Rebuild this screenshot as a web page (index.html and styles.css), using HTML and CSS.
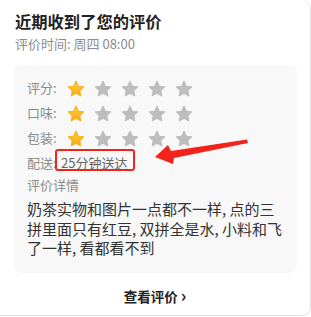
FILE: index.html
```html
<!DOCTYPE html>
<html lang="zh">
<head>
    <meta charset="UTF-8">
    <meta name="viewport" content="width=device-width, initial-scale=1.0">
    <title>评价</title>
    <link rel="stylesheet" href="styles.css">
</head>
<body>
    <div class="card">
        <h1 class="titulo">近期收到了您的评价</h1>
        <p class="fecha">评价时间: 周四 08:00</p>
        <div class="caja">
            <div class="fila">
                <span class="etiqueta">评分:</span>
                <div class="estrellas" data-n="1"></div>
            </div>
            <div class="fila">
                <span class="etiqueta">口味:</span>
                <div class="estrellas" data-n="1"></div>
            </div>
            <div class="fila">
                <span class="etiqueta">包装:</span>
                <div class="estrellas" data-n="1"></div>
            </div>
            <div class="fila">
                <span class="etiqueta">配送:</span>
                <span class="valor">25分钟送达<span class="marca"></span></span>
            </div>
            <div class="detalle-titulo">评价详情</div>
            <p class="detalle">奶茶实物和图片一点都不一样, 点的三拼里面只有红豆, 双拼全是水, 小料和飞了一样, 看都看不到</p>
        </div>
        <div class="pie">查看评价 <span class="flecha">&#8250;</span></div>
        <svg class="anotacion" width="311" height="317" viewBox="0 0 311 317">
            <polygon points="155,157 168,145 171,151 247,139.5 248,143 174,158 173,164" fill="#f2231b"/>
        </svg>
    </div>

    <script>
        const estrella = (llena) => `
            <svg class="estrella" width="18" height="18" viewBox="0 0 24 24">
                <path d="M12 1.8l3.1 6.5 7 .9-5.1 4.9 1.3 7-6.3-3.4-6.3 3.4 1.3-7L1.9 9.2l7-.9z"
                    fill="${llena ? 'url(#oro)' : '#bdbdbd'}" stroke="${llena ? '#f5b21c' : '#bdbdbd'}"
                    stroke-width="1.6" stroke-linejoin="round"/>
            </svg>`;

        document.querySelectorAll('.estrellas').forEach(caja => {
            const n = Number(caja.dataset.n);
            let html = '';
            for (let i = 0; i < 5; i++) {
                html += estrella(i < n);
            }
            caja.innerHTML = html;
        });

        // degradado compartido de las estrellas
        document.body.insertAdjacentHTML('beforeend', `
            <svg width="0" height="0" style="position:absolute">
                <defs>
                    <linearGradient id="oro" x1="0" y1="0" x2="0" y2="1">
                        <stop offset="0" stop-color="#ffd23a"/>
                        <stop offset="1" stop-color="#f7a81b"/>
                    </linearGradient>
                </defs>
            </svg>`);
    </script>
</body>
</html>
```

FILE: styles.css
```css
body {
    margin: 0;
    padding: 0;
    background: #ffffff;
    font-family: "Noto Sans CJK SC", "Noto Sans", sans-serif;
}
.card {
    position: relative;
    box-sizing: border-box;
    width: 311px;
    height: 316px;
    padding: 10px 14px 0 14px;
    background: #ffffff;
    border-right: 1px solid #e2e2e2;
    border-bottom: 1px solid #e2e2e2;
    border-radius: 0 9px 9px 0;
}
.titulo {
    margin: 0;
    font-size: 16.3px;
    line-height: 22px;
    font-weight: bold;
    color: #222;
    padding-left: 1px;
}
.fecha {
    margin: 3px 0 0 1px;
    font-size: 13px;
    line-height: 18px;
    color: #8c8c8c;
}
.caja {
    margin-top: 12px;
    width: 283px;
    box-sizing: border-box;
    padding: 10px 12px 15px 13px;
    background: #f8f8f8;
    border-radius: 7px;
}
.fila {
    height: 25px;
    display: flex;
    align-items: center;
}
.etiqueta {
    width: 40px;
    flex: none;
    font-size: 13px;
    color: #8c8c8c;
}
.estrellas {
    display: flex;
    gap: 9px;
    margin-top: 2px;
}
.estrella {
    display: block;
}
.valor {
    position: relative;
    margin-left: -6px;
    font-size: 13px;
    color: #666;
}
.marca {
    position: absolute;
    left: -6px;
    top: -4px;
    width: 76px;
    height: 18px;
    border: 2px solid #f2231b;
    border-radius: 3px;
}
.detalle-titulo {
    margin-top: 1px;
    font-size: 13px;
    line-height: 18px;
    color: #8c8c8c;
}
.detalle {
    margin: 5px 0 0 0;
    font-size: 15px;
    line-height: 19.5px;
    color: #333;
}
.pie {
    margin-top: 12px;
    text-align: center;
    font-size: 13.5px;
    line-height: 20px;
    font-weight: bold;
    color: #222;
}
.flecha {
    font-size: 17px;
}
.anotacion {
    position: absolute;
    top: 0;
    left: 0;
    pointer-events: none;
}
```
